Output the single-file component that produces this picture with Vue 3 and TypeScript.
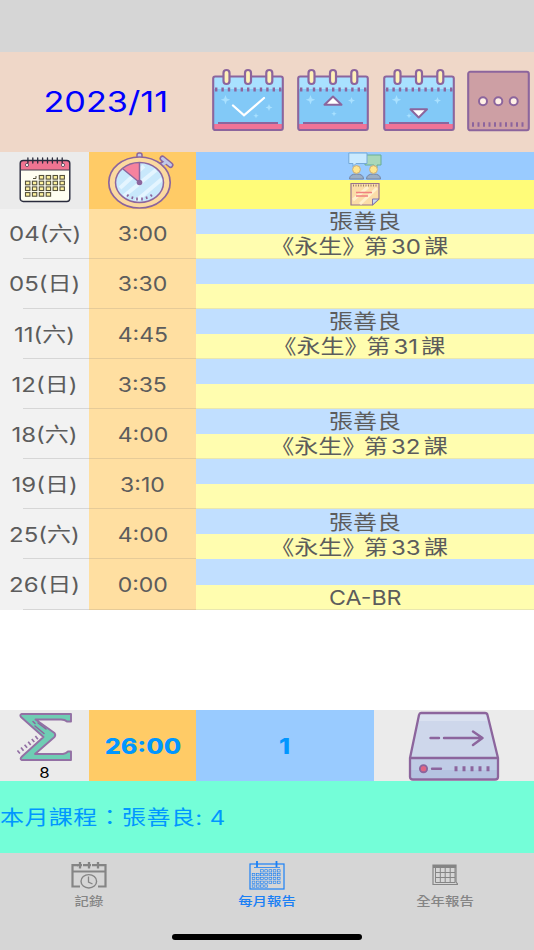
<script setup lang="ts">
interface Row {
  date: string
  time: string
  person?: string
  lesson?: number
  note?: string
}

const rows: Row[] = [
  { date: '04(六)', time: '3:00', person: '張善良', lesson: 30 },
  { date: '05(日)', time: '3:30' },
  { date: '11(六)', time: '4:45', person: '張善良', lesson: 31 },
  { date: '12(日)', time: '3:35' },
  { date: '18(六)', time: '4:00', person: '張善良', lesson: 32 },
  { date: '19(日)', time: '3:10' },
  { date: '25(六)', time: '4:00', person: '張善良', lesson: 33 },
  { date: '26(日)', time: '0:00', note: 'CA-BR' },
]

const buttons = ['check', 'up', 'down'] as const
const rings = [15.5, 37, 58.3]

const days: [number, number][] = []
for (let r = 0; r < 4; r++) {
  for (let c = 0; c < 6; c++) {
    if ((r === 0 && c < 1) || (r === 3 && c > 3)) continue
    days.push([6 + c * 6.9, 16 + r * 5.7])
  }
}

const tabDays: [number, number][] = []
for (let r = 0; r < 5; r++) {
  for (let c = 0; c < 7; c++) {
    if ((r === 0 && c < 2) || (r === 4 && c > 3)) continue
    tabDays.push([3 + c * 4.2, 8.7 + r * 3.8])
  }
}
</script>

<template>
  <main class="screen">
    <div class="status"></div>

    <header class="head">
      <div class="title"><span class="wide">2023/11</span></div>
      <svg v-for="b in buttons" :key="b" class="cal" viewBox="0 0 74 64">
        <rect x="2" y="8.5" width="70" height="53.5" rx="2" fill="#82c9f7" />
        <rect x="3" y="9" width="68" height="12" fill="#a9e1ff" />
        <path d="M4 21.5H71" stroke="#8c659d" stroke-width="4" stroke-dasharray="2.4 4" />
        <rect x="3" y="56" width="68" height="5.5" fill="#f07396" />
        <path d="M7 55H67" stroke="#8c659d" stroke-width="2" />
        <rect x="2.2" y="8.5" width="69.6" height="53.5" rx="2" fill="none" stroke="#8c659d" stroke-width="2.1" />
        <g v-for="x in rings" :key="x">
          <rect :x="x - 3" y="2" width="6" height="14" rx="3" fill="#fff0b8" stroke="#8c659d" stroke-width="2.2" />
        </g>
        <path d="M14.500 27l1.300 3.400 3.400 1.300-3.400 1.300-1.300 3.400-1.300-3.400-3.400-1.300 3.400-1.300z" fill="#a9e1ff" />
        <path d="M58 36l1 2.500 2.500 1-2.500 1-1 2.500-1-2.500-2.500-1 2.500-1z" fill="#a9e1ff" :transform="b === 'check' ? '' : 'translate(-2.500 -7)'" />
        <path d="M38 43l.7 2 2 .7-2 .7-.7 2-.7-2-2-.7 2-.7z" fill="#a9e1ff" :transform="b === 'check' ? 'translate(7 2)' : b === 'up' ? '' : 'translate(-11 2)'" />
        <path v-if="b === 'check'" d="M22 37.500L33 47.300 53 30" fill="none" stroke="#fff" stroke-width="2.300" stroke-linecap="round" />
        <path v-if="b === 'up'" d="M28.500 36.800L37 28.500l8.500 8.300z" fill="#fff" stroke="#8c659d" stroke-width="2" stroke-linejoin="round" />
        <path v-if="b === 'down'" d="M28.500 41.200H45L36.700 49.500z" fill="#fff" stroke="#8c659d" stroke-width="2" stroke-linejoin="round" />
      </svg>
      <svg class="more" viewBox="0 0 63 64">
        <rect x="1.200" y="3.800" width="60.600" height="58.500" rx="2" fill="#cd9fa4" stroke="#8c659d" stroke-width="2.100" />
        <path d="M5 56.500H58" stroke="#8c659d" stroke-width="4.500" stroke-dasharray="2 3.500" />
        <circle v-for="x in [16, 31.300, 46.700]" :key="x" :cx="x" cy="33.300" r="4" fill="#fff1e6" stroke="#8c659d" stroke-width="2" />
      </svg>
    </header>

    <section class="grid heads">
      <div class="c-date">
        <svg class="date-icon" viewBox="0 0 52 46">
          <rect x="1.200" y="3.500" width="49.600" height="41" rx="3" fill="#fffff2" />
          <path d="M1.200 13V6.500q0-3 3-3h43.600q3 0 3 3V13z" fill="#ef7491" />
          <path d="M2 13H50" stroke="#47414f" stroke-width="1" />
          <rect x="1.200" y="3.500" width="49.600" height="41" rx="3" fill="none" stroke="#292b3d" stroke-width="1.400" />
          <path v-for="i in 8" :key="i" :d="`M${4 + i * 4.900} 1V6`" stroke="#292b3d" stroke-width="1.300" stroke-linecap="round" />
          <circle cx="8" cy="8" r="1.600" fill="#fff" stroke="#47414f" stroke-width=".8" />
          <circle cx="44" cy="8" r="1.600" fill="#fff" stroke="#47414f" stroke-width=".8" />
          <path d="M14 21.500h3v-2.500" fill="none" stroke="#55513c" />
          <template v-for="(d, i) in days" :key="i">
            <rect v-if="i > 0" :x="d[0] + .5" :y="d[1] + 2.500" width="4.400" height="3.600" fill="#fff3a0" stroke="#55513c" stroke-width="1.100" />
          </template>
        </svg>
      </div>
      <div class="c-time">
        <svg class="watch" viewBox="0 0 68 57">
          <rect x="30" y="1" width="5" height="9" rx="2" fill="#bfc9ea" stroke="#8c659d" stroke-width="1.500" />
          <path d="M51 15l8-6" stroke="#8c659d" stroke-width="5" />
          <path d="M55.500 6.500l8 6.500" stroke="#8c659d" stroke-width="6" stroke-linecap="round" />
          <path d="M55.500 6.500l8 6.500M52 15l6-4" stroke="#bfc9ea" stroke-width="2.900" stroke-linecap="round" />
          <ellipse cx="32.500" cy="30.500" rx="30.700" ry="25.500" fill="#fbd9a0" stroke="#8c659d" stroke-width="1.700" />
          <ellipse cx="32.500" cy="30.500" rx="24" ry="20" fill="#c8e8fb" />
          <path d="M13 36L37 14M17 44L49 18M29 49L55 27" stroke="#e4f5ff" stroke-width="4" />
          <path d="M32.500 30.500V10.500Q23 10.500 16 16.500z" fill="#f5829e" />
          <ellipse cx="32.500" cy="30.500" rx="24" ry="20" fill="none" stroke="#8c659d" stroke-width="1.500" />
          <path d="M32.500 30.500V11M32.500 30.500L16 17" stroke="#8c659d" stroke-width="1.500" />
          <circle cx="32.500" cy="30.500" r="2.800" fill="#8c659d" />
          <path d="M20 44.500l1.500-2M25 47l.7-2.500M30 48.500v-3M35 48.500v-3M40 47l-.7-2.500M45 44.500l-1.500-2" stroke="#8c659d" stroke-width="1.700" />
        </svg>
      </div>
      <div class="c-info">
        <div class="half blue">
          <svg class="talk" viewBox="0 0 34 28">
            <path d="M17 3H33V13H29v3l-3-3H17z" fill="#a8d8ba" stroke="#69ad94" />
            <path d="M.8 1H19V11.500H8L5 14.500V11.500H.8z" fill="#c9eaff" stroke="#74a9d8" />
            <g v-for="x in [8.500, 25.500]" :key="x">
              <path :d="`M${x - 7} 27q0-5 7-5t7 5z`" fill="#9cafc4" stroke="#7385a8" />
              <circle :cx="x" cy="17.500" r="3.900" fill="#ffe68c" stroke="#c9ad78" />
            </g>
          </svg>
        </div>
        <div class="half yellow">
          <svg class="note" viewBox="0 0 30 24">
            <path d="M1 1.500H29V17L22.500 23H1z" fill="#fbdda8" stroke="#98738f" stroke-width="1.200" />
            <path d="M3 18L18 5M10 22L27 6" stroke="#fff0cc" stroke-width="3" />
            <path d="M3 3.500H28" stroke="#9c8266" stroke-width="2" stroke-dasharray="1 1.500" />
            <path d="M6 10.500H22M6 14H18" stroke="#f08080" stroke-width="1.300" />
            <path d="M22.500 23V17H29z" fill="#c7dcf4" stroke="#8275a8" />
          </svg>
        </div>
      </div>
    </section>

    <section v-for="row in rows" :key="row.date" class="grid row">
      <div class="c-date"><span class="wide date">{{ row.date }}</span></div>
      <div class="c-time"><span class="wide time">{{ row.time }}</span></div>
      <div class="c-info">
        <div class="half blue"><span v-if="row.person" class="wide">{{ row.person }}</span></div>
        <div class="half yellow">
          <span v-if="row.lesson" class="wide lesson"><i class="open">《</i>永生<i class="close">》</i>第<b>{{ row.lesson }}</b>課</span>
          <span v-else-if="row.note" class="wide note-text">{{ row.note }}</span>
        </div>
      </div>
    </section>

    <div class="blank"></div>

    <section class="totals">
      <div class="sum">
        <svg class="sigma" viewBox="0 0 56 50">
          <path d="M4.500 2H54V9.500H50Q48 7.500 44 7.500H18.500L37.500 21Q39 23 37.500 25L18 42H46Q49 41.500 51 39.500H54V48H4.500Q2.500 47 5 44.500L26.500 25 4 5Q2.500 3 4.500 2z" fill="#6fcdb4" stroke="#9370a4" stroke-width="1.900" stroke-linejoin="round" />
          <path d="M16 9.500l2 2M21 11l8 6M18 14l9 7.500" stroke="#8c659d" stroke-width="1.500" stroke-linecap="round" />
          <path d="M1 40.500L21 24.500" stroke="#9370a4" stroke-width="4" stroke-dasharray="1.700 2.900" />
        </svg>
        <span class="wide count">8</span>
      </div>
      <div class="total-time"><span class="wide">26:00</span></div>
      <div class="total-num"><span class="wide">1</span></div>
      <div class="export">
        <svg class="disk" viewBox="0 0 92 70">
          <path d="M13 2H77Q79 2 79.500 4L90 47H2L11 4Q11.500 2 13 2z" fill="#ced7eb" />
          <path d="M12 3H78L80 10H10z" fill="#dae1f0" />
          <path d="M2 47H90V66Q90 68.500 87 68.500H5Q2 68.500 2 66z" fill="#c0cce6" />
          <path d="M3 59H89V67H3z" fill="#b5c3e1" />
          <path d="M13 2H77Q79 2 79.500 4L90 47V66Q90 68.500 87 68.500H5Q2 68.500 2 66V47L11 4Q11.500 2 13 2zM2 47H90" fill="none" stroke="#8c659d" stroke-width="2.300" stroke-linejoin="round" />
          <path d="M22.500 27H31M36 27H74M65 20.500L74.500 27 65 34M24 57.700H33" fill="none" stroke="#8c659d" stroke-width="2.400" stroke-linecap="round" stroke-linejoin="round" />
          <path d="M46.500 57.700H82" stroke="#8c659d" stroke-width="5" stroke-dasharray="3 5" />
          <circle cx="15.500" cy="57.700" r="3.600" fill="#df6584" stroke="#8c659d" stroke-width="1.900" />
        </svg>
      </div>
    </section>

    <div class="summary"><span class="wide">本月課程：張善良: 4</span></div>

    <nav class="tabs">
      <div class="tab">
        <svg class="t1" viewBox="0 0 36 27" fill="none" stroke="#858585">
          <path d="M7 3.200H1.500V24.500H9M29 3.200H34.500V24.500H27M1.500 9.500H34.500M12 3.200H15M21 3.200H24" stroke-width="2.200" />
          <path v-for="x in [9, 18, 27]" :key="x" :d="`M${x} 0V6.500M${x - 3} 3.200H${x + 2}`" stroke-width="2.300" />
          <ellipse cx="17.800" cy="19.300" rx="7.800" ry="6.700" fill="#d6d6d6" stroke-width="1.400" />
          <path d="M17.500 14.500V20L21.500 22" stroke-width="1.300" />
        </svg>
        <span class="wide">記錄</span>
      </div>
      <div class="tab active">
        <svg class="t2" viewBox="0 0 36 29" fill="none" stroke="#1b80f5">
          <rect x="1" y="3" width="34" height="25" stroke-width="1.200" />
          <path d="M8 0V6M27.500 0V6" stroke-width="1.800" />
          <path d="M5 6.500H31" stroke-width=".8" />
          <rect v-for="(d, i) in tabDays" :key="i" :x="d[0] + .2" :y="d[1]" width="2.700" height="2.300" stroke-width=".65" />
        </svg>
        <span class="wide">每月報告</span>
      </div>
      <div class="tab">
        <svg class="t3" viewBox="0 0 26 22" fill="none" stroke="#858585">
          <path d="M1 1H24V18L26 20.500H1zM3.500 18.500H23" stroke-width="1.200" />
          <path d="M1 2.500H24" stroke-width="3" />
          <path d="M3.500 4V18.500M8.300 4V18.500M13.200 4V18.500M18.200 4V18.500M23 4V18.500M3 8.500H23M3 13.500H23" stroke-width="1" />
        </svg>
        <span class="wide">全年報告</span>
      </div>
    </nav>
    <div class="home"><div class="bar"></div></div>
  </main>
</template>

<style>
body {
  margin: 0;
}
</style>

<style scoped>
.screen {
  width: 534px;
  height: 950px;
  overflow: hidden;
  display: flex;
  flex-direction: column;
  background: #fff;
  font-family: Inter, "Noto Sans CJK TC", sans-serif;
  color: #5c5c5c;
}
.screen > * {
  flex-shrink: 0;
}
svg {
  display: block;
  flex-shrink: 0;
}
.wide {
  display: inline-block;
  white-space: nowrap;
  transform: scaleX(1.2);
}
.status {
  height: 52px;
  background: #d6d6d6;
}
.head {
  height: 99.500px;
  display: flex;
  align-items: flex-start;
  background: #efd7c8;
}
.title {
  width: 211px;
  height: 99px;
  display: flex;
  align-items: center;
  justify-content: center;
  font-size: 29px;
  color: #00f;
}
.title .wide {
  transform: scaleX(1.18);
}
.cal {
  width: 74px;
  height: 64px;
  margin-top: 16px;
  margin-right: 11.300px;
}
.more {
  width: 63px;
  height: 64px;
  margin-top: 16px;
}
.grid {
  display: grid;
  grid-template-columns: 89.300px 106.700px 1fr;
  grid-template-rows: 100%;
}
.grid > div {
  display: flex;
  align-items: center;
  justify-content: center;
  min-height: 0;
}
.grid > .c-info {
  flex-direction: column;
  align-items: stretch;
}
.half {
  flex: 1 1 0;
  min-height: 0;
  display: flex;
  align-items: center;
  justify-content: center;
}
.heads {
  height: 57px;
}
.heads .c-date {
  background: #ebebeb;
}
.heads .c-time {
  background: #ffcb66;
}
.heads .blue {
  background: #99cbff;
}
.heads .yellow {
  background: #fffc79;
}
.date-icon {
  width: 52px;
  height: 46px;
}
.watch {
  width: 68px;
  height: 57px;
  margin-left: -3px;
}
.talk {
  width: 34px;
  height: 28px;
}
.note {
  width: 30px;
  height: 24px;
}
.row {
  height: 50.150px;
  font-size: 20px;
  line-height: 24px;
}
.row .wide {
  padding-top: 1.400px;
}
.row .c-date {
  background: linear-gradient(#d6d6d6, #d6d6d6) 23px 100% / 100% 1px no-repeat #f2f2f2;
}
.row .c-time {
  background: linear-gradient(#e6cb98, #e6cb98) 0 100% / 100% 1px no-repeat #ffdfa1;
}
.row .time {
  transform: scaleX(1.15);
}
.row .blue {
  background: #c1dfff;
}
.row .yellow {
  background: linear-gradient(#e9e7b0, #e9e7b0) 0 100% / 100% 1px no-repeat #fffdaf;
}
.lesson i {
  font-style: normal;
}
.open {
  font-feature-settings: "halt";
}
.close {
  letter-spacing: -2px;
}
.lesson b {
  font-weight: 400;
  padding: 0 2.700px;
}
.row .note-text {
  transform: scaleX(1.16);
}
.blank {
  height: 100.300px;
}
.totals {
  height: 71.500px;
  display: grid;
  grid-template-columns: 89.300px 106.700px 178px 1fr;
  font-size: 21px;
  font-weight: 800;
  color: #0096ff;
}
.totals > div {
  display: flex;
  align-items: center;
  justify-content: center;
}
.totals > .sum {
  flex-direction: column;
  justify-content: flex-start;
  background: #ebebeb;
}
.sigma {
  width: 56px;
  height: 50px;
  margin-top: 2px;
}
.count {
  font-size: 14px;
  line-height: 20px;
  margin-top: 1px;
  font-weight: 400;
  color: #000;
}
.total-time {
  background: #ffcb66;
}
.total-num {
  background: #99cbff;
}
.export {
  background: #ebebeb;
}
.disk {
  width: 92px;
  height: 70px;
}
.summary {
  height: 71.500px;
  display: flex;
  align-items: center;
  background: #74fed8;
  color: #0096ff;
  font-size: 20px;
  line-height: 24px;
}
.summary .wide {
  transform-origin: left;
  letter-spacing: .35px;
  padding-top: 2px;
}
.tabs {
  flex: 1;
  display: grid;
  grid-template-columns: repeat(3, 1fr);
  background: #d6d6d6;
  color: #858585;
  font-size: 12px;
  font-weight: 500;
}
.tab {
  display: flex;
  flex-direction: column;
  align-items: center;
  line-height: 16px;
}
.tab.active {
  color: #1b80f5;
}
.t1 {
  width: 36px;
  height: 27px;
  margin: 9px 0 5px;
}
.t2 {
  width: 36px;
  height: 29px;
  margin: 8px 0 4px;
}
.t3 {
  width: 26px;
  height: 22px;
  margin: 11px 0 8px;
}
.home {
  height: 16px;
  background: #d6d6d6;
}
.bar {
  width: 190px;
  height: 6px;
  margin: 0 auto;
  border-radius: 3px;
  background: #000;
}
</style>
